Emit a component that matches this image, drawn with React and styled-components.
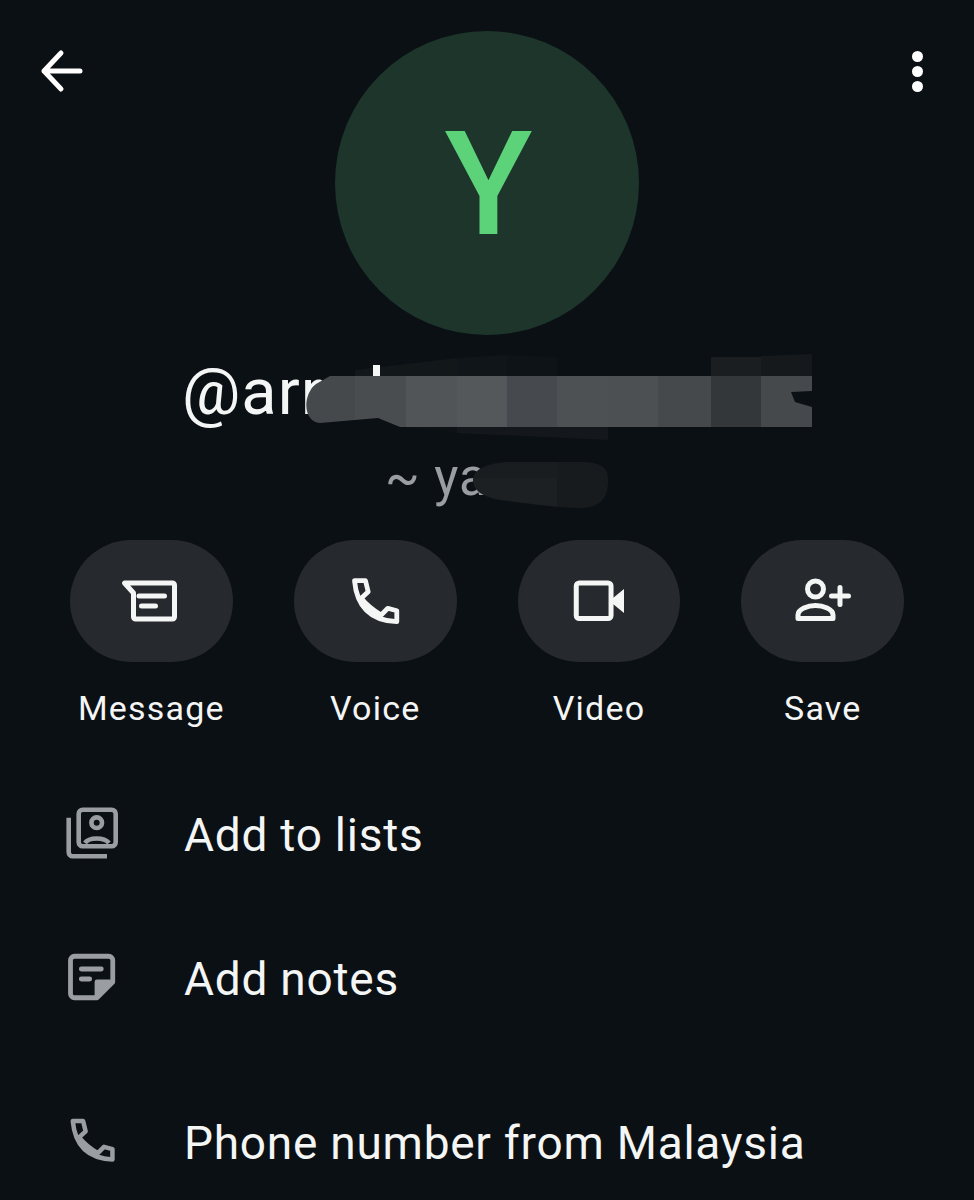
import styled, { createGlobalStyle } from "styled-components"

const GlobalStyle = createGlobalStyle`
    html, body {
        margin: 0;
        padding: 0;
        background: #0b1014;
    }
`;

const actions = [
    { label: "Message", icon: <MessageIcon /> },
    { label: "Voice", icon: <PhoneIcon color="#f4f5f5" /> },
    { label: "Video", icon: <VideoIcon /> },
    { label: "Save", icon: <SaveIcon /> },
];

// pixelated blur over the handle: [x, width, colour]
const mosaic = [
    [300, 55, "#46494c"],
    [355, 51, "#494d50"],
    [406, 51, "#515558"],
    [457, 50, "#54585b"],
    [507, 50, "#46494d"],
    [557, 51, "#4d5154"],
    [608, 50, "#4c5053"],
    [658, 53, "#45494c"],
    [711, 50, "#34373a"],
    [761, 51, "#46494c"],
];

const faintTop = [
    [355, 102, "#12171a"],
    [457, 50, "#101519"],
    [507, 50, "#0e1317"],
];

export default function App() {
    return (
        <Page>
            <GlobalStyle />
            <Header>
                <BackButton>
                    <svg width="44" height="44" viewBox="0 0 44 44" fill="none" stroke="#fff" strokeWidth="5" strokeLinecap="round" strokeLinejoin="round">
                        <path d="M40 22H4M21 4L4 22l17 18" />
                    </svg>
                </BackButton>
                <Avatar>Y</Avatar>
                <MoreButton>
                    <Dot />
                    <Dot />
                    <Dot />
                </MoreButton>
            </Header>

            <Identity>
                <Name>@arr</Name>
                <Nickname>~ ya</Nickname>
                <Redaction viewBox="0 335 974 205">
                    <defs>
                        <clipPath id="band">
                            <path d="M330 376H812V427H400L378 418L320 423C303 422 302 395 316 384Z" />
                        </clipPath>
                        <clipPath id="bandTop">
                            <path d="M355 370L457 358L507 355L557 357V376H355Z" />
                        </clipPath>
                        <clipPath id="nick">
                            <path d="M473 478C475 468 490 463 507 462H585C604 463 609 470 608 482C608 498 600 508 580 508C555 508 525 503 500 500C482 497 472 490 473 478Z" />
                        </clipPath>
                    </defs>
                    <g clipPath="url(#bandTop)">
                        {faintTop.map(([x, w, c]) => <rect key={x} x={x} y="350" width={w} height="30" fill={c} />)}
                    </g>
                    <rect x="711" y="357" width="50" height="19" fill="#1a1e21" />
                    <path d="M761 356L812 354V376H761Z" fill="#15191c" />
                    <path d="M400 427H457V433Z" fill="#0d1215" />
                    <path d="M457 427H608V440L457 433Z" fill="#14181c" />
                    <rect x="373" y="365" width="7" height="11" fill="#f4f5f5" />
                    <g clipPath="url(#band)">
                        {mosaic.map(([x, w, c]) => <rect key={x} x={x} y="376" width={w} height="51" fill={c} />)}
                    </g>
                    <path d="M791 392L812 391V407L795 402Z" fill="#0b1014" />
                    <g clipPath="url(#nick)">
                        <rect x="470" y="460" width="87" height="18" fill="#191d20" />
                        <rect x="470" y="478" width="87" height="32" fill="#1c2023" />
                        <rect x="557" y="460" width="55" height="50" fill="#171b1e" />
                    </g>
                </Redaction>
            </Identity>

            <Actions>
                {actions.map(a => (
                    <Action key={a.label}>
                        <Pill>{a.icon}</Pill>
                        <ActionLabel>{a.label}</ActionLabel>
                    </Action>
                ))}
            </Actions>

            <List>
                <Row>
                    <RowIcon><ListsIcon /></RowIcon>
                    <RowText>Add to lists</RowText>
                </Row>
                <Row>
                    <RowIcon><NotesIcon /></RowIcon>
                    <RowText>Add notes</RowText>
                </Row>
                <Row>
                    <RowIcon $lift={6}><PhoneIcon color="#9a9ea2" /></RowIcon>
                    <RowText>Phone number from Malaysia</RowText>
                </Row>
            </List>
        </Page>
    );
}

function MessageIcon() {
    return (
        <svg width="64" height="64" viewBox="0 0 64 64" fill="none" stroke="#f4f5f5" strokeWidth="5" strokeLinecap="round" strokeLinejoin="round">
            <path d="M5.5 14H53.5a2 2 0 0 1 2 2V48a2 2 0 0 1-2 2H16.5a2 2 0 0 1-2-2V24Z" />
            <path d="M20 27H45.5M22.5 37H36.5" />
        </svg>
    );
}

function PhoneIcon({ color }) {
    return (
        <svg width="64" height="64" viewBox="0 0 64 64" fill="none" stroke={color} strokeWidth="4.8" strokeLinejoin="round">
            <path d="M11.5 11.7H22.5L25.2 22.7L18.2 29.3Q26 39 38.2 46L44.8 39.3L53.8 41.7V52.7Q15 51 11.5 11.7Z" />
        </svg>
    );
}

function VideoIcon() {
    return (
        <svg width="64" height="64" viewBox="0 0 64 64" fill="none" stroke="#f4f5f5" strokeWidth="5" strokeLinejoin="round">
            <rect x="9.25" y="14" width="34.8" height="35.5" rx="3" />
            <path d="M46 29L57 20V44L46 35Z" fill="#f4f5f5" stroke="none" />
        </svg>
    );
}

function SaveIcon() {
    return (
        <svg width="64" height="64" viewBox="0 0 64 64" fill="none" stroke="#f4f5f5" strokeWidth="5" strokeLinecap="round" strokeLinejoin="round">
            <circle cx="24.5" cy="20" r="8" />
            <path d="M7 49.5V46C7 40 17 36.5 24.5 36.5S42 40 42 46V49.5Z" />
            <path d="M40.5 27H57.5M49 18.5V35.5" />
        </svg>
    );
}

function ListsIcon() {
    return (
        <svg width="60" height="60" viewBox="0 0 60 60" fill="none" stroke="#9a9ea2" strokeWidth="4.6" strokeLinejoin="round">
            <rect x="16.7" y="4.7" width="37" height="36.6" rx="4" />
            <path d="M6.7 12.7V47.3a4 4 0 0 0 4 4H45" />
            <circle cx="34.7" cy="17.7" r="5.3" />
            <path d="M23 38C27 32 42 32 47 38" />
        </svg>
    );
}

function NotesIcon() {
    return (
        <svg width="60" height="60" viewBox="0 0 60 60" fill="none" stroke="#9a9ea2" strokeWidth="4.8" strokeLinejoin="round" strokeLinecap="round">
            <path d="M12.5 7.25H46.75a4 4 0 0 1 4 4V33L35 48.75H12.5a4 4 0 0 1-4-4V11.25a4 4 0 0 1 4-4Z" />
            <path d="M48 33H35V47L48 33Z" fill="#9a9ea2" />
            <path d="M19.3 20H39.3M19.3 30H27.7" />
        </svg>
    );
}

const Page = styled.div`
    width: 974px;
    height: 1200px;
    overflow: hidden;
    background: #0b1014;
    font-family: Roboto, "Noto Sans", sans-serif;
    color: #f4f5f5;
`;

const Header = styled.header`
    display: grid;
    grid-template-columns: 1fr auto 1fr;
    padding-top: 31px;
`;

const BackButton = styled.div`
    justify-self: start;
    margin: 18px 0 0 40px;
`;

const Avatar = styled.div`
    box-sizing: border-box;
    width: 304px;
    height: 304px;
    padding-left: 3px;
    border-radius: 50%;
    background: #1d352b;
    color: #5cd279;
    font-size: 144px;
    font-weight: 500;
    line-height: 308px;
    text-align: center;
`;

const MoreButton = styled.div`
    justify-self: end;
    display: flex;
    flex-direction: column;
    gap: 4px;
    margin: 20px 51px 0 0;
`;

const Dot = styled.span`
    width: 11px;
    height: 11px;
    border-radius: 50%;
    background: #fff;
`;

const Identity = styled.section`
    position: relative;
    height: 205px;
`;

const Name = styled.div`
    padding: 24px 0 0 182px;
    font-size: 65px;
    line-height: 66px;
    letter-spacing: 1px;
`;

const Nickname = styled.div`
    padding: 27px 0 0 385px;
    font-size: 51px;
    line-height: 52px;
    letter-spacing: 1px;
    color: #9a9ea2;
`;

const Redaction = styled.svg`
    position: absolute;
    inset: 0;
    width: 100%;
    height: 100%;
`;

const Actions = styled.div`
    display: flex;
    gap: 61px;
    padding-left: 70px;
`;

const Action = styled.div`
    width: 162.8px;
    display: flex;
    flex-direction: column;
    align-items: center;
`;

const Pill = styled.div`
    width: 100%;
    height: 122px;
    border-radius: 61px;
    background: #26292d;
    display: flex;
    align-items: center;
    justify-content: center;
`;

const ActionLabel = styled.div`
    margin-top: 27px;
    font-size: 34px;
    line-height: 38px;
    letter-spacing: 1.2px;
    white-space: nowrap;
`;

const List = styled.div`
    margin-top: 36px;
`;

const Row = styled.div`
    height: 144px;
    display: flex;
    align-items: center;
    &:last-child {
        margin-top: 20px;
    }
`;

const RowIcon = styled.div`
    width: 60px;
    margin: 0 62px ${props => props.$lift || 0}px 62px;
    display: flex;
    justify-content: center;
`;

const RowText = styled.div`
    font-size: 46px;
    line-height: 54px;
    letter-spacing: 0.75px;
    white-space: nowrap;
`;
